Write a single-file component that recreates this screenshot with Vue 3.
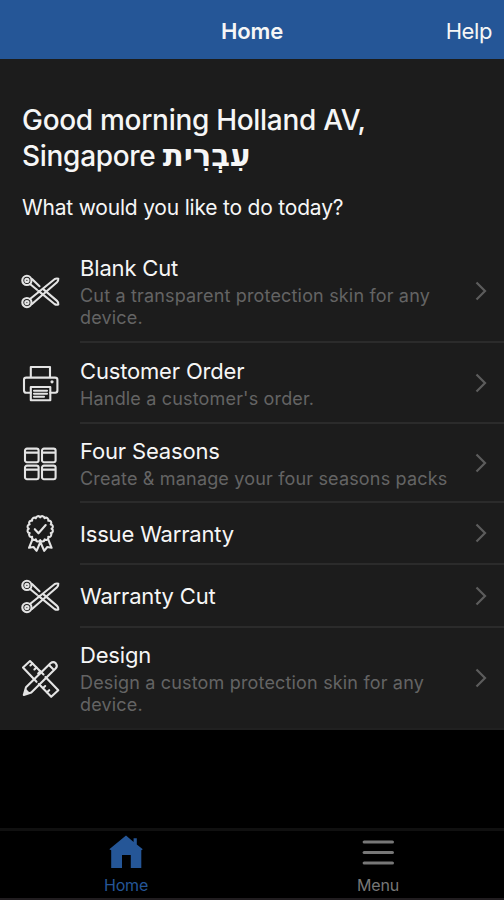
<template>
  <div class="screen">
    <header class="navbar">
      <span class="navbar-title">Home</span>
      <span class="navbar-help">Help</span>
    </header>

    <main class="content">
      <div class="greeting">
        <h1>Good morning Holland AV,<br />Singapore <span class="hebrew" lang="he">עִבְרִית</span></h1>
        <p>What would you like to do today?</p>
      </div>

      <ul class="list">
        <li v-for="item in items" :key="item.title" class="row" :style="{ height: item.height + 'px' }">
          <svg class="icon" viewBox="0 0 40 40">
            <g v-if="item.icon === 'scissors'">
              <circle cx="6.9" cy="8.4" r="4.6" />
              <circle cx="6.9" cy="8.4" r="1.6" />
              <circle cx="6.9" cy="30.6" r="4.6" />
              <circle cx="6.9" cy="30.6" r="1.6" />
              <path d="M10 27 L34.5 7.2 Q36.5 6 38.3 6.7 Q38.5 9 37 10.3 L12 32" />
              <path d="M10 12 L17 17.8 M20.3 20.4 L34.5 32 Q36.5 33.2 38.3 32.5 Q38.5 30.2 37 28.9 L23.5 17.4 M19.5 14.2 L12 7" />
              <circle cx="19" cy="19.5" r="0.7" />
            </g>
            <g v-else-if="item.icon === 'printer'">
              <path d="M10.8 13 V3 H30 V13" />
              <path d="M10.8 28.8 H6.2 Q4 28.8 4 26.6 V15.8 Q4 13.6 6.2 13.6 H35 Q37.4 13.6 37.4 15.8 V26.6 Q37.4 28.8 35.2 28.8 H30.3" />
              <path d="M10.8 23 H30.3 V36.3 H10.8 Z M14 26.7 H27 M14 29.7 H27 M14 32.7 H24" />
              <circle cx="32" cy="17.8" r="1.6" class="solid" />
            </g>
            <g v-else-if="item.icon === 'grid'">
              <g v-for="cell in cells" :key="cell" :transform="`translate(${cell})`">
                <rect x="0" y="0" width="13.6" height="13.6" rx="2" />
                <path d="M1 4 H13" />
              </g>
            </g>
            <g v-else-if="item.icon === 'medal'">
              <path :d="sealPath" />
              <path d="M14.8 15.2 L18.5 19.3 L25.7 11" />
              <path d="M12.5 25.3 L9 33.8 L13.5 33 L16.6 36.8 L20.4 28 L24.2 36.8 L27.3 33 L31.6 33.8 L28.2 25.3" />
            </g>
            <g v-else>
              <path d="M16.5 22.8 L3 8.5 L10 2 L23.5 15.5 M25.5 18 L38.3 31.2 L31.2 37.8 L18.8 25" />
              <path d="M10.4 6.4 L12.4 4.4 M14.4 10.4 L16.4 8.4 M18.2 14.4 L20.4 12.2 M27 33.3 L29.2 31.2 M23 29 L25.2 27" />
              <path d="M3.8 36 L6 28.2 L30.5 4.3 Q33.2 2 35.8 4.3 Q38 7 35.6 9.6 L11.3 33.5 Z M29 6 L34 11" />
              <path d="M3.8 36 L5.6 29.5 L10 34 Z" class="solid" />
            </g>
          </svg>
          <div class="body">
            <div class="text">
              <div class="title">{{ item.title }}</div>
              <div v-if="item.desc" class="desc">{{ item.desc }}</div>
            </div>
            <svg class="chevron" viewBox="0 0 12 20">
              <path d="M1.5 1.5 L10 10 L1.5 18.5" />
            </svg>
          </div>
        </li>
      </ul>
    </main>

    <nav class="tabbar">
      <div class="tab active">
        <svg viewBox="0 0 34 34">
          <path d="M17 0.5 L24.6 7 V3.2 H27.8 V9.6 L33.8 14.3 L32.3 15.3 V33 H21.8 V20 H13 V33 H2.2 V15.3 L0.3 14.3 Z" />
        </svg>
        <span>Home</span>
      </div>
      <div class="tab">
        <svg viewBox="0 0 34 34">
          <rect x="1.6" y="5.4" width="31.4" height="3.2" rx="1.6" />
          <rect x="1.6" y="15.9" width="31.4" height="3.2" rx="1.6" />
          <rect x="1.6" y="26.4" width="31.4" height="3.2" rx="1.6" />
        </svg>
        <span>Menu</span>
      </div>
    </nav>
  </div>
</template>

<script setup>
const items = [
  { title: 'Blank Cut', desc: 'Cut a transparent protection skin for any device.', icon: 'scissors', height: 102 },
  { title: 'Customer Order', desc: "Handle a customer's order.", icon: 'printer', height: 81 },
  { title: 'Four Seasons', desc: 'Create & manage your four seasons packs', icon: 'grid', height: 79 },
  { title: 'Issue Warranty', icon: 'medal', height: 62 },
  { title: 'Warranty Cut', icon: 'scissors', height: 63 },
  { title: 'Design', desc: 'Design a custom protection skin for any device.', icon: 'design', height: 102 },
]

const cells = ['5 4.6', '22 4.6', '5 21.6', '22 21.6']

// scalloped edge of the warranty seal
const sealPath = makeSeal(20.2, 14.8, 11.4, 16)

function makeSeal(cx, cy, r, count) {
  let d = ''
  for (let i = 0; i <= count; i++) {
    const a = (i / count) * Math.PI * 2
    const x = (cx + r * Math.cos(a)).toFixed(2)
    const y = (cy + r * Math.sin(a)).toFixed(2)
    d += i === 0 ? `M${x} ${y}` : ` A2.3 2.3 0 0 1 ${x} ${y}`
  }
  return d + ' Z'
}
</script>

<style>
body {
  margin: 0;
  background: #000;
}
</style>

<style scoped>
.screen {
  display: flex;
  flex-direction: column;
  box-sizing: border-box;
  width: 504px;
  height: 900px;
  overflow: hidden;
  background: #000;
  border-bottom: 2px solid #211d20;
  font-family: Inter, "Liberation Sans", sans-serif;
  color: #f6f6f6;
}

.navbar {
  display: grid;
  grid-template-columns: 1fr auto 1fr;
  align-items: center;
  box-sizing: border-box;
  height: 59px;
  padding: 3px 12px 0;
  background: #255697;
  font-size: 22px;
  line-height: 28px;
}

.navbar-title {
  grid-column: 2;
  font-weight: 600;
  letter-spacing: -0.1px;
}

.navbar-help {
  justify-self: end;
  letter-spacing: -0.4px;
}

.content {
  background: #1c1c1c;
}

.greeting {
  box-sizing: border-box;
  height: 182px;
  padding: 43px 22px 0;
}

.greeting h1 {
  margin: 0;
  font-size: 28px;
  font-weight: 500;
  line-height: 36px;
  letter-spacing: -0.3px;
}

.hebrew {
  font-family: "DejaVu Sans", sans-serif;
  font-size: 30.8px;
  font-weight: 700;
  line-height: 1;
  letter-spacing: 0;
}

.greeting p {
  margin: 22px 0 0;
  font-size: 21px;
  line-height: 24px;
  letter-spacing: -0.2px;
}

.list {
  margin: 0;
  padding: 0;
  list-style: none;
}

.row {
  display: flex;
  align-items: center;
  padding-left: 20px;
}

.icon {
  flex: none;
  width: 40px;
  height: 40px;
  margin-right: 20px;
  fill: none;
  stroke: #e4e4e4;
  stroke-width: 2.1;
  stroke-linejoin: round;
  stroke-linecap: round;
}

.icon .solid {
  fill: #e4e4e4;
  stroke: none;
}

.body {
  display: flex;
  flex: 1;
  align-items: center;
  box-sizing: border-box;
  height: 100%;
  padding-right: 17px;
  border-bottom: 2px solid #2b2b2b;
}

.row:last-child .body {
  border-bottom-color: #202020;
}

.text {
  flex: 1;
  padding: 1px 16px 0 0;
}

.title {
  font-size: 22px;
  line-height: 28px;
  letter-spacing: -0.17px;
}

.desc {
  padding-top: 3px;
  font-size: 18px;
  line-height: 22px;
  letter-spacing: 0.17px;
  color: #646464;
}

.chevron {
  flex: none;
  width: 12px;
  height: 20px;
  fill: none;
  stroke: #5c5c5c;
  stroke-width: 2.2;
}

.tabbar {
  display: flex;
  box-sizing: border-box;
  height: 70px;
  margin-top: auto;
  border-top: 3px solid #101010;
}

.tab {
  display: flex;
  flex: 1;
  flex-direction: column;
  align-items: center;
  padding-top: 4px;
  color: #777;
  font-size: 16px;
  line-height: 20px;
  letter-spacing: -0.2px;
}

.tab svg {
  width: 34px;
  height: 34px;
  margin-bottom: 6px;
  fill: currentColor;
}

.tab.active {
  color: #255697;
}
</style>
